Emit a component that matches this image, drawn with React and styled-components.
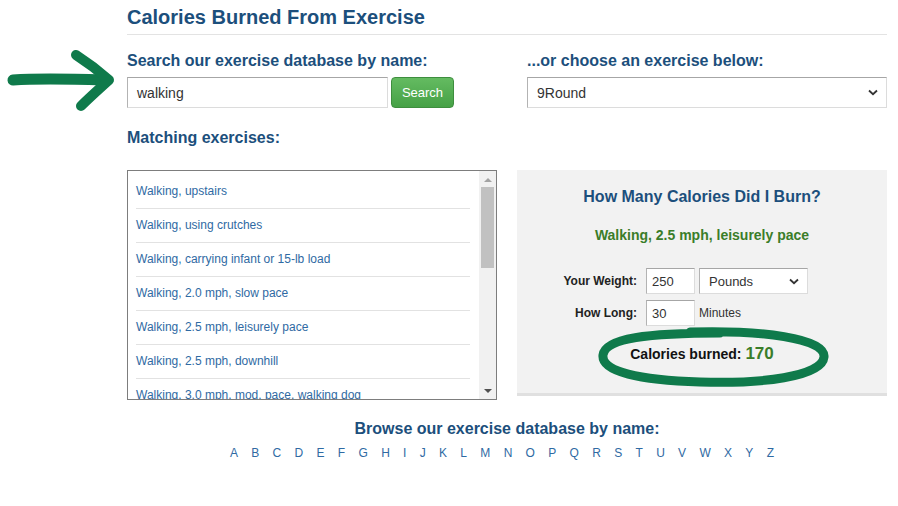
import styled, { createGlobalStyle } from "styled-components";

const GlobalStyle = createGlobalStyle`
  html, body {
    margin: 0;
    padding: 0;
    background: #fff;
  }
  body {
    font-family: "Liberation Sans", Arial, sans-serif;
  }
`;

const Page = styled.div`
  position: relative;
  width: 898px;
  height: 506px;
  overflow: hidden;
`;

const Container = styled.div`
  margin-left: 127px;
  width: 760px;
  padding-top: 6px;
`;

const Title = styled.h1`
  margin: 0;
  font-size: 20px;
  line-height: 23px;
  font-weight: bold;
  color: #1c4f7c;
  padding-bottom: 5px;
  border-bottom: 1px solid #e3e3e3;
`;

const Heading = styled.h2`
  margin: ${(p) => p.$margin || "0"};
  font-size: 16px;
  line-height: 19px;
  font-weight: bold;
  color: #1c4f7c;
  text-align: ${(p) => (p.$center ? "center" : "left")};
`;

const TopRow = styled.div`
  display: grid;
  grid-template-columns: 400px 360px;
  margin-top: 16px;
`;

const SearchRow = styled.div`
  display: flex;
  align-items: center;
  margin-top: 7px;
`;

const TextInput = styled.div`
  box-sizing: border-box;
  width: ${(p) => p.$width}px;
  height: ${(p) => p.$height}px;
  padding-left: ${(p) => p.$pad || 9}px;
  display: flex;
  align-items: center;
  background: #fff;
  border: 1px solid #dcdcdc;
  border-top-color: #a6a6a6;
  border-left-color: #b3b3b3;
  font-size: ${(p) => p.$size || 14}px;
  color: #333;
`;

const SearchButton = styled.button`
  box-sizing: border-box;
  margin-left: 3px;
  width: 63px;
  height: 31px;
  border: 1px solid #3e8e3e;
  border-radius: 4px;
  background: linear-gradient(#64bb61, #46a146);
  color: #fff;
  font-family: "Liberation Sans", Arial, sans-serif;
  font-size: 13px;
  padding: 0;
`;

const SelectBox = styled.div`
  box-sizing: border-box;
  width: ${(p) => p.$width}px;
  height: ${(p) => p.$height}px;
  margin-left: ${(p) => p.$ml || 0}px;
  margin-top: ${(p) => p.$mt || 0}px;
  padding: 0 8px 0 ${(p) => p.$pad || 9}px;
  display: flex;
  align-items: center;
  justify-content: space-between;
  background: #fff;
  border: 1px solid #dcdcdc;
  border-top-color: #a6a6a6;
  border-left-color: #b3b3b3;
  font-size: ${(p) => p.$size || 14}px;
  color: #333;
`;

const Chevron = () => (
  <svg width="10" height="7" viewBox="0 0 10 7">
    <path d="M1 1.5 L5 5.2 L9 1.5" fill="none" stroke="#333" strokeWidth="1.8" />
  </svg>
);

const MainRow = styled.div`
  display: grid;
  grid-template-columns: 370px 370px;
  column-gap: 20px;
  margin-top: 23px;
`;

const ListBox = styled.div`
  box-sizing: border-box;
  height: 230px;
  border: 1px solid #7d7d7d;
  display: flex;
  overflow: hidden;
`;

const ListItems = styled.div`
  flex: 1;
  padding: 4px 9px 0 8px;
  overflow: hidden;
`;

const ListItem = styled.a`
  display: block;
  height: 33px;
  line-height: 33px;
  border-bottom: 1px solid #e2e2e2;
  font-size: 12px;
  color: #2f6aa3;
  white-space: nowrap;
  text-decoration: none;
`;

const Scrollbar = styled.div`
  width: 17px;
  background: #f1f1f1;
  display: flex;
  flex-direction: column;
  align-items: center;
`;

const ScrollArrow = styled.div`
  width: 0;
  height: 0;
  border-left: 4px solid transparent;
  border-right: 4px solid transparent;
  ${(p) =>
    p.$down
      ? "border-top: 4px solid #505050; margin-top: auto; margin-bottom: 6px;"
      : "border-bottom: 4px solid #a3a3a3; margin-top: 7px;"}
`;

const ScrollThumb = styled.div`
  width: 13px;
  height: 81px;
  margin-top: 5px;
  background: #c1c1c1;
`;

const CalcPanel = styled.div`
  box-sizing: border-box;
  height: 226px;
  background: #f2f2f2;
  border-bottom: 3px solid #e0e0e0;
  padding-top: 17px;
`;

const Activity = styled.div`
  margin-top: 21px;
  text-align: center;
  font-size: 14px;
  line-height: 17px;
  font-weight: bold;
  color: #3a7d29;
`;

const FormRow = styled.div`
  display: flex;
  align-items: center;
  margin-top: ${(p) => p.$mt}px;
`;

const FieldLabel = styled.div`
  box-sizing: border-box;
  width: 129px;
  padding-right: 9px;
  text-align: right;
  font-size: 12px;
  font-weight: bold;
  color: #222;
`;

const Unit = styled.span`
  margin-left: 4px;
  font-size: 12px;
  color: #333;
`;

const Result = styled.div`
  margin-top: 18px;
  text-align: center;
  font-size: 14px;
  line-height: 19px;
  font-weight: bold;
  color: #111;
`;

const ResultValue = styled.span`
  font-size: 17px;
  color: #3a7d29;
`;

const Letters = styled.div`
  margin-top: 8px;
  display: flex;
  justify-content: center;
  gap: 13.3px;
  padding-right: 10px;
  font-size: 12px;
  line-height: 14px;
`;

const Letter = styled.a`
  color: #2f6aa3;
  text-decoration: none;
`;

const Annotation = styled.svg`
  position: absolute;
  left: 0;
  top: 0;
  pointer-events: none;
`;

const exercises = [
  "Walking, upstairs",
  "Walking, using crutches",
  "Walking, carrying infant or 15-lb load",
  "Walking, 2.0 mph, slow pace",
  "Walking, 2.5 mph, leisurely pace",
  "Walking, 2.5 mph, downhill",
  "Walking, 3.0 mph, mod. pace, walking dog",
];

const alphabet = "ABCDEFGHIJKLMNOPQRSTUVWXYZ".split("");

export default function App() {
  return (
    <Page>
      <GlobalStyle />
      <Container>
        <Title>Calories Burned From Exercise</Title>
        <TopRow>
          <div>
            <Heading>Search our exercise database by name:</Heading>
            <SearchRow>
              <TextInput $width={261} $height={31}>walking</TextInput>
              <SearchButton>Search</SearchButton>
            </SearchRow>
          </div>
          <div>
            <Heading>...or choose an exercise below:</Heading>
            <SelectBox $width={360} $height={31} $mt={7}>
              9Round
              <Chevron />
            </SelectBox>
          </div>
        </TopRow>

        <Heading $margin="20px 0 0">Matching exercises:</Heading>

        <MainRow>
          <ListBox>
            <ListItems>
              {exercises.map((name) => (
                <ListItem key={name}>{name}</ListItem>
              ))}
            </ListItems>
            <Scrollbar>
              <ScrollArrow />
              <ScrollThumb />
              <ScrollArrow $down />
            </Scrollbar>
          </ListBox>

          <CalcPanel>
            <Heading $center>How Many Calories Did I Burn?</Heading>
            <Activity>Walking, 2.5 mph, leisurely pace</Activity>
            <FormRow $mt={24}>
              <FieldLabel>Your Weight:</FieldLabel>
              <TextInput $width={49} $height={26} $pad={5} $size={13}>250</TextInput>
              <SelectBox $width={109} $height={26} $ml={4} $size={13}>
                Pounds
                <Chevron />
              </SelectBox>
            </FormRow>
            <FormRow $mt={6}>
              <FieldLabel>How Long:</FieldLabel>
              <TextInput $width={49} $height={26} $pad={5} $size={13}>30</TextInput>
              <Unit>Minutes</Unit>
            </FormRow>
            <Result>
              Calories burned: <ResultValue>170</ResultValue>
            </Result>
          </CalcPanel>
        </MainRow>

        <Heading $center $margin="19px 0 0">
          Browse our exercise database by name:
        </Heading>
        <Letters>
          {alphabet.map((l) => (
            <Letter key={l}>{l}</Letter>
          ))}
        </Letters>
      </Container>

      <Annotation width="898" height="506" viewBox="0 0 898 506">
        <g fill="none" stroke="#0f7a4b" strokeLinecap="round" strokeLinejoin="round">
          <path d="M13 80 C 40 78, 75 79, 104 80" strokeWidth="11" />
          <path d="M76 55 C 90 64, 100 72, 109 80 C 99 89, 89 98, 81 106" strokeWidth="10" />
          <path
            d="M690 332 C 760 330, 826 338, 824 357 C 822 377, 760 384, 700 382 C 640 380, 601 372, 603 355 C 605 338, 648 333, 720 333"
            strokeWidth="9"
          />
        </g>
      </Annotation>
    </Page>
  );
}
